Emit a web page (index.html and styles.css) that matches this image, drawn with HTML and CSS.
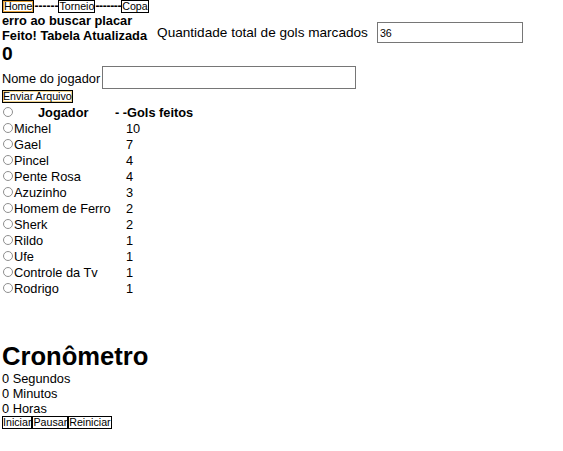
FILE: index.html
```html
<!DOCTYPE html>
<html lang="pt-BR">
<head>
<meta charset="utf-8">
<title>Placar</title>
<link rel="stylesheet" href="styles.css">
</head>
<body>
<nav class="nav"><button class="btn btn-focus btn-home">Home</button><span class="sep">------</span><button class="btn">Torneio</button><span class="sep sep-long">-------</span><button class="btn">Copa</button></nav>
<div class="status">
  <div class="status-msgs">
    <div class="bold">erro ao buscar placar</div>
    <div class="bold">Feito! Tabela Atualizada</div>
  </div>
  <label class="total">Quantidade total de gols marcados <input class="total-input" type="text" value="36"></label>
</div>
<h2 class="zero">0</h2>
<div class="player-form">
  <label class="player-label">Nome do jogador<input class="player-input" type="text"></label>
  <button class="btn btn-send">Enviar Arquivo</button>
</div>
<div class="table">
  <div class="row head"><span class="radio"></span><span class="h-name">Jogador</span><span class="h-gols">- -Gols feitos</span></div>
  <div class="row"><span class="radio"></span><span class="name">Michel</span><span class="gols">10</span></div>
  <div class="row"><span class="radio"></span><span class="name">Gael</span><span class="gols">7</span></div>
  <div class="row"><span class="radio"></span><span class="name">Pincel</span><span class="gols">4</span></div>
  <div class="row"><span class="radio"></span><span class="name">Pente Rosa</span><span class="gols">4</span></div>
  <div class="row"><span class="radio"></span><span class="name">Azuzinho</span><span class="gols">3</span></div>
  <div class="row"><span class="radio"></span><span class="name">Homem de Ferro</span><span class="gols">2</span></div>
  <div class="row"><span class="radio"></span><span class="name">Sherk</span><span class="gols">2</span></div>
  <div class="row"><span class="radio"></span><span class="name">Rildo</span><span class="gols">1</span></div>
  <div class="row"><span class="radio"></span><span class="name">Ufe</span><span class="gols">1</span></div>
  <div class="row"><span class="radio"></span><span class="name">Controle da Tv</span><span class="gols">1</span></div>
  <div class="row"><span class="radio"></span><span class="name">Rodrigo</span><span class="gols">1</span></div>
</div>
<section class="timer">
  <h1 class="timer-title">Cronômetro</h1>
  <div class="line">0 Segundos</div>
  <div class="line">0 Minutos</div>
  <div class="line">0 Horas</div>
  <div class="timer-btns"><button class="btn">Iniciar</button><button class="btn">Pausar</button><button class="btn">Reiniciar</button></div>
</section>
</body>
</html>
```
FILE: styles.css
```css
html, body {
  margin: 0;
  padding: 0;
  background: #fff;
}
body {
  padding-left: 2px;
  font-family: "Liberation Sans", Arial, sans-serif;
  font-size: 12.8px;
  line-height: 15px;
  color: #000;
}
.btn {
  font-family: "Liberation Sans", Arial, sans-serif;
  font-size: 10.67px;
  line-height: 11px;
  height: 13px;
  padding: 0;
  margin: 0;
  border: 1px solid #000;
  background: #fff;
  color: #000;
  vertical-align: top;
}
.btn-focus {
  box-shadow: inset 0 0 0 1px #e8a33a;
}
.btn-home {
  padding: 0 1px;
}
.nav {
  height: 13px;
  line-height: 13px;
  font-weight: bold;
  display: flex;
  align-items: flex-start;
}
.sep {
  font-size: 12px;
}
.sep-long {
  letter-spacing: -0.3px;
}
.status {
  display: flex;
  align-items: flex-end;
  gap: 10px;
}
.bold {
  font-weight: bold;
  line-height: 15px;
}
.total {
  display: flex;
  align-items: center;
  gap: 9px;
  font-size: 13.6px;
}
.total-input {
  width: 146px;
  height: 21px;
  box-sizing: border-box;
  border: 1px solid #767676;
  font-family: "Liberation Sans", Arial, sans-serif;
  font-size: 10.67px;
  padding: 0 2px;
  margin: 0;
}
.zero {
  margin: 0;
  font-size: 19.2px;
  line-height: 22px;
  font-weight: bold;
}
.player-form {
  display: flex;
  flex-direction: column;
  align-items: flex-start;
}
.player-label {
  display: flex;
  align-items: flex-end;
  height: 24px;
  line-height: 20px;
}
.player-input {
  width: 254px;
  height: 23px;
  box-sizing: border-box;
  border: 1px solid #767676;
  margin: 0 0 0 2px;
  padding: 0;
}
.btn-send {
  margin-top: 1px;
  box-shadow: inset 0 0 0 1px #f0d28a;
}
.table {
  margin-top: 1px;
}
.row {
  display: flex;
  align-items: center;
  height: 16px;
}
.radio {
  width: 10px;
  height: 10px;
  box-sizing: border-box;
  border: 1px solid #8f8f8f;
  border-radius: 50%;
  margin: 0 1px 0 1px;
  flex: none;
}
.name {
  width: 112px;
}
.head {
  font-weight: bold;
}
.h-name {
  margin-left: 24px;
  width: 77px;
}
.timer {
  margin-top: 45px;
}
.timer-title {
  margin: 0;
  font-size: 25.6px;
  line-height: 30px;
  font-weight: bold;
}
.line {
  line-height: 15px;
}
.timer-btns {
  display: flex;
}
```
